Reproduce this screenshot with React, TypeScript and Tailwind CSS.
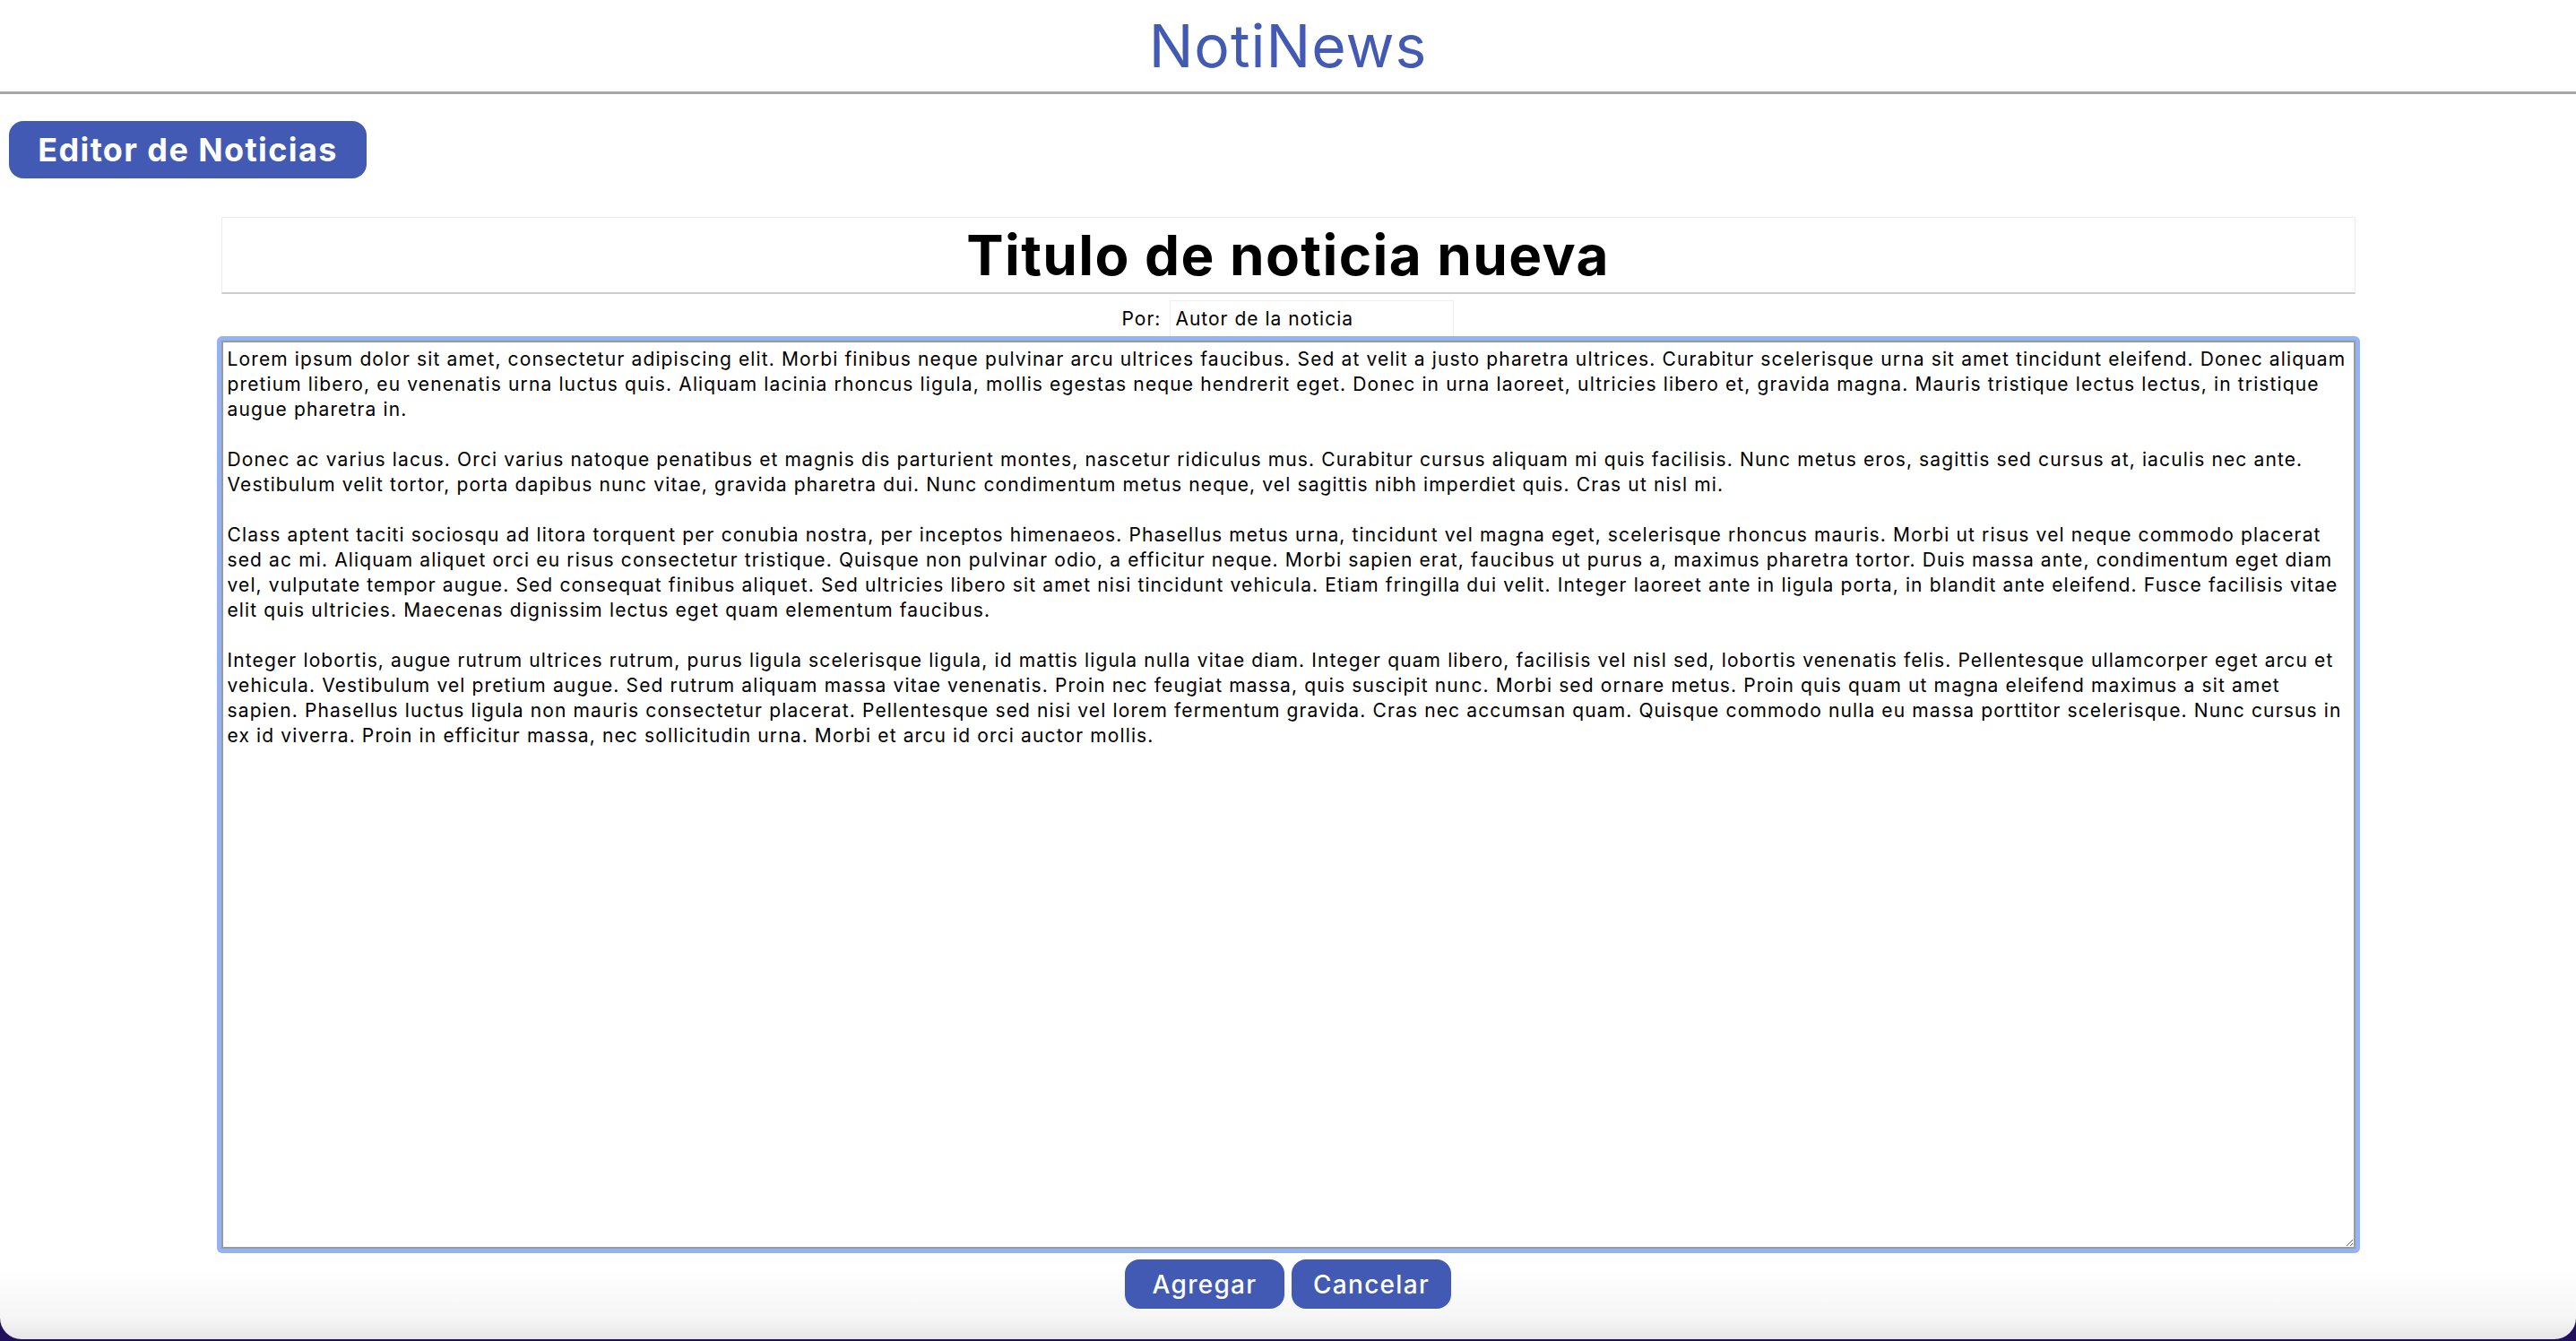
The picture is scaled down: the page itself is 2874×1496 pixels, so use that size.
const body = `Lorem ipsum dolor sit amet, consectetur adipiscing elit. Morbi finibus neque pulvinar arcu ultrices faucibus. Sed at velit a justo pharetra ultrices. Curabitur scelerisque urna sit amet tincidunt eleifend. Donec aliquam pretium libero, eu venenatis urna luctus quis. Aliquam lacinia rhoncus ligula, mollis egestas neque hendrerit eget. Donec in urna laoreet, ultricies libero et, gravida magna. Mauris tristique lectus lectus, in tristique augue pharetra in.

Donec ac varius lacus. Orci varius natoque penatibus et magnis dis parturient montes, nascetur ridiculus mus. Curabitur cursus aliquam mi quis facilisis. Nunc metus eros, sagittis sed cursus at, iaculis nec ante. Vestibulum velit tortor, porta dapibus nunc vitae, gravida pharetra dui. Nunc condimentum metus neque, vel sagittis nibh imperdiet quis. Cras ut nisl mi.

Class aptent taciti sociosqu ad litora torquent per conubia nostra, per inceptos himenaeos. Phasellus metus urna, tincidunt vel magna eget, scelerisque rhoncus mauris. Morbi ut risus vel neque commodo placerat sed ac mi. Aliquam aliquet orci eu risus consectetur tristique. Quisque non pulvinar odio, a efficitur neque. Morbi sapien erat, faucibus ut purus a, maximus pharetra tortor. Duis massa ante, condimentum eget diam vel, vulputate tempor augue. Sed consequat finibus aliquet. Sed ultricies libero sit amet nisi tincidunt vehicula. Etiam fringilla dui velit. Integer laoreet ante in ligula porta, in blandit ante eleifend. Fusce facilisis vitae elit quis ultricies. Maecenas dignissim lectus eget quam elementum faucibus.

Integer lobortis, augue rutrum ultrices rutrum, purus ligula scelerisque ligula, id mattis ligula nulla vitae diam. Integer quam libero, facilisis vel nisl sed, lobortis venenatis felis. Pellentesque ullamcorper eget arcu et vehicula. Vestibulum vel pretium augue. Sed rutrum aliquam massa vitae venenatis. Proin nec feugiat massa, quis suscipit nunc. Morbi sed ornare metus. Proin quis quam ut magna eleifend maximus a sit amet sapien. Phasellus luctus ligula non mauris consectetur placerat. Pellentesque sed nisi vel lorem fermentum gravida. Cras nec accumsan quam. Quisque commodo nulla eu massa porttitor scelerisque. Nunc cursus in ex id viverra. Proin in efficitur massa, nec sollicitudin urna. Morbi et arcu id orci auctor mollis.`

export default function App() {
    return (
        <div className="h-[1496px] w-full bg-[#21105e] font-['Inter',sans-serif] text-black">
            <div className="flex h-[1494px] flex-col rounded-b-[24px] bg-[linear-gradient(180deg,#ffffff_0%,#ffffff_94.5%,#f5f5f5_98.5%,#e6e6e6_100%)]">
                {/* Header */}
                <header className="flex h-[105px] shrink-0 items-start justify-center border-b-[3px] border-[#a6a6a6] pt-[18px]">
                    <h1 className="text-[66px] font-normal leading-none tracking-[1px] text-[#425ab3]">NotiNews</h1>
                </header>

                <div className="ml-[10px] mt-[30px] flex h-[64px] w-[399px] items-center justify-center rounded-[16px] bg-[#425ab3]">
                    <span className="text-[36px] font-bold tracking-[1.4px] text-white">Editor de Noticias</span>
                </div>

                {/* Title */}
                <div className="mx-auto mt-[43px] flex h-[86px] w-[2381px] items-center justify-center border border-[#ececec] border-b-2 border-b-[#cdcdcd]">
                    <h2 className="text-[62px] font-bold leading-none tracking-[1.4px]">Titulo de noticia nueva</h2>
                </div>

                {/* Author */}
                <div className="mt-[7px] flex h-[41px] items-center justify-center gap-[10px]">
                    <span className="text-[21px] tracking-[1px]">Por:</span>
                    <input
                        type="text"
                        defaultValue="Autor de la noticia"
                        className="h-[41px] w-[317px] border border-[#eeeeee] px-[5px] text-[21px] tracking-[1px] outline-none"
                    />
                </div>

                {/* Body */}
                <div className="relative mx-auto mt-[-1px] w-[2391px] rounded-[6px] bg-[#94b3f5] p-[5px]">
                    <textarea
                        defaultValue={body}
                        className="block h-[1013px] w-full resize border-2 border-[#9a9a9a] bg-white p-[5px] text-[21px] leading-[28px] tracking-[1.13px] outline-none"
                    />
                </div>

                <div className="mt-[7px] flex justify-center gap-[8px]">
                    <button className="h-[55px] w-[178px] rounded-[16px] bg-[#425ab3] text-[28px] font-medium tracking-[1.3px] text-white">Agregar</button>
                    <button className="h-[55px] w-[178px] rounded-[16px] bg-[#425ab3] text-[28px] font-medium tracking-[1.3px] text-white">Cancelar</button>
                </div>
            </div>
        </div>
    )
}
